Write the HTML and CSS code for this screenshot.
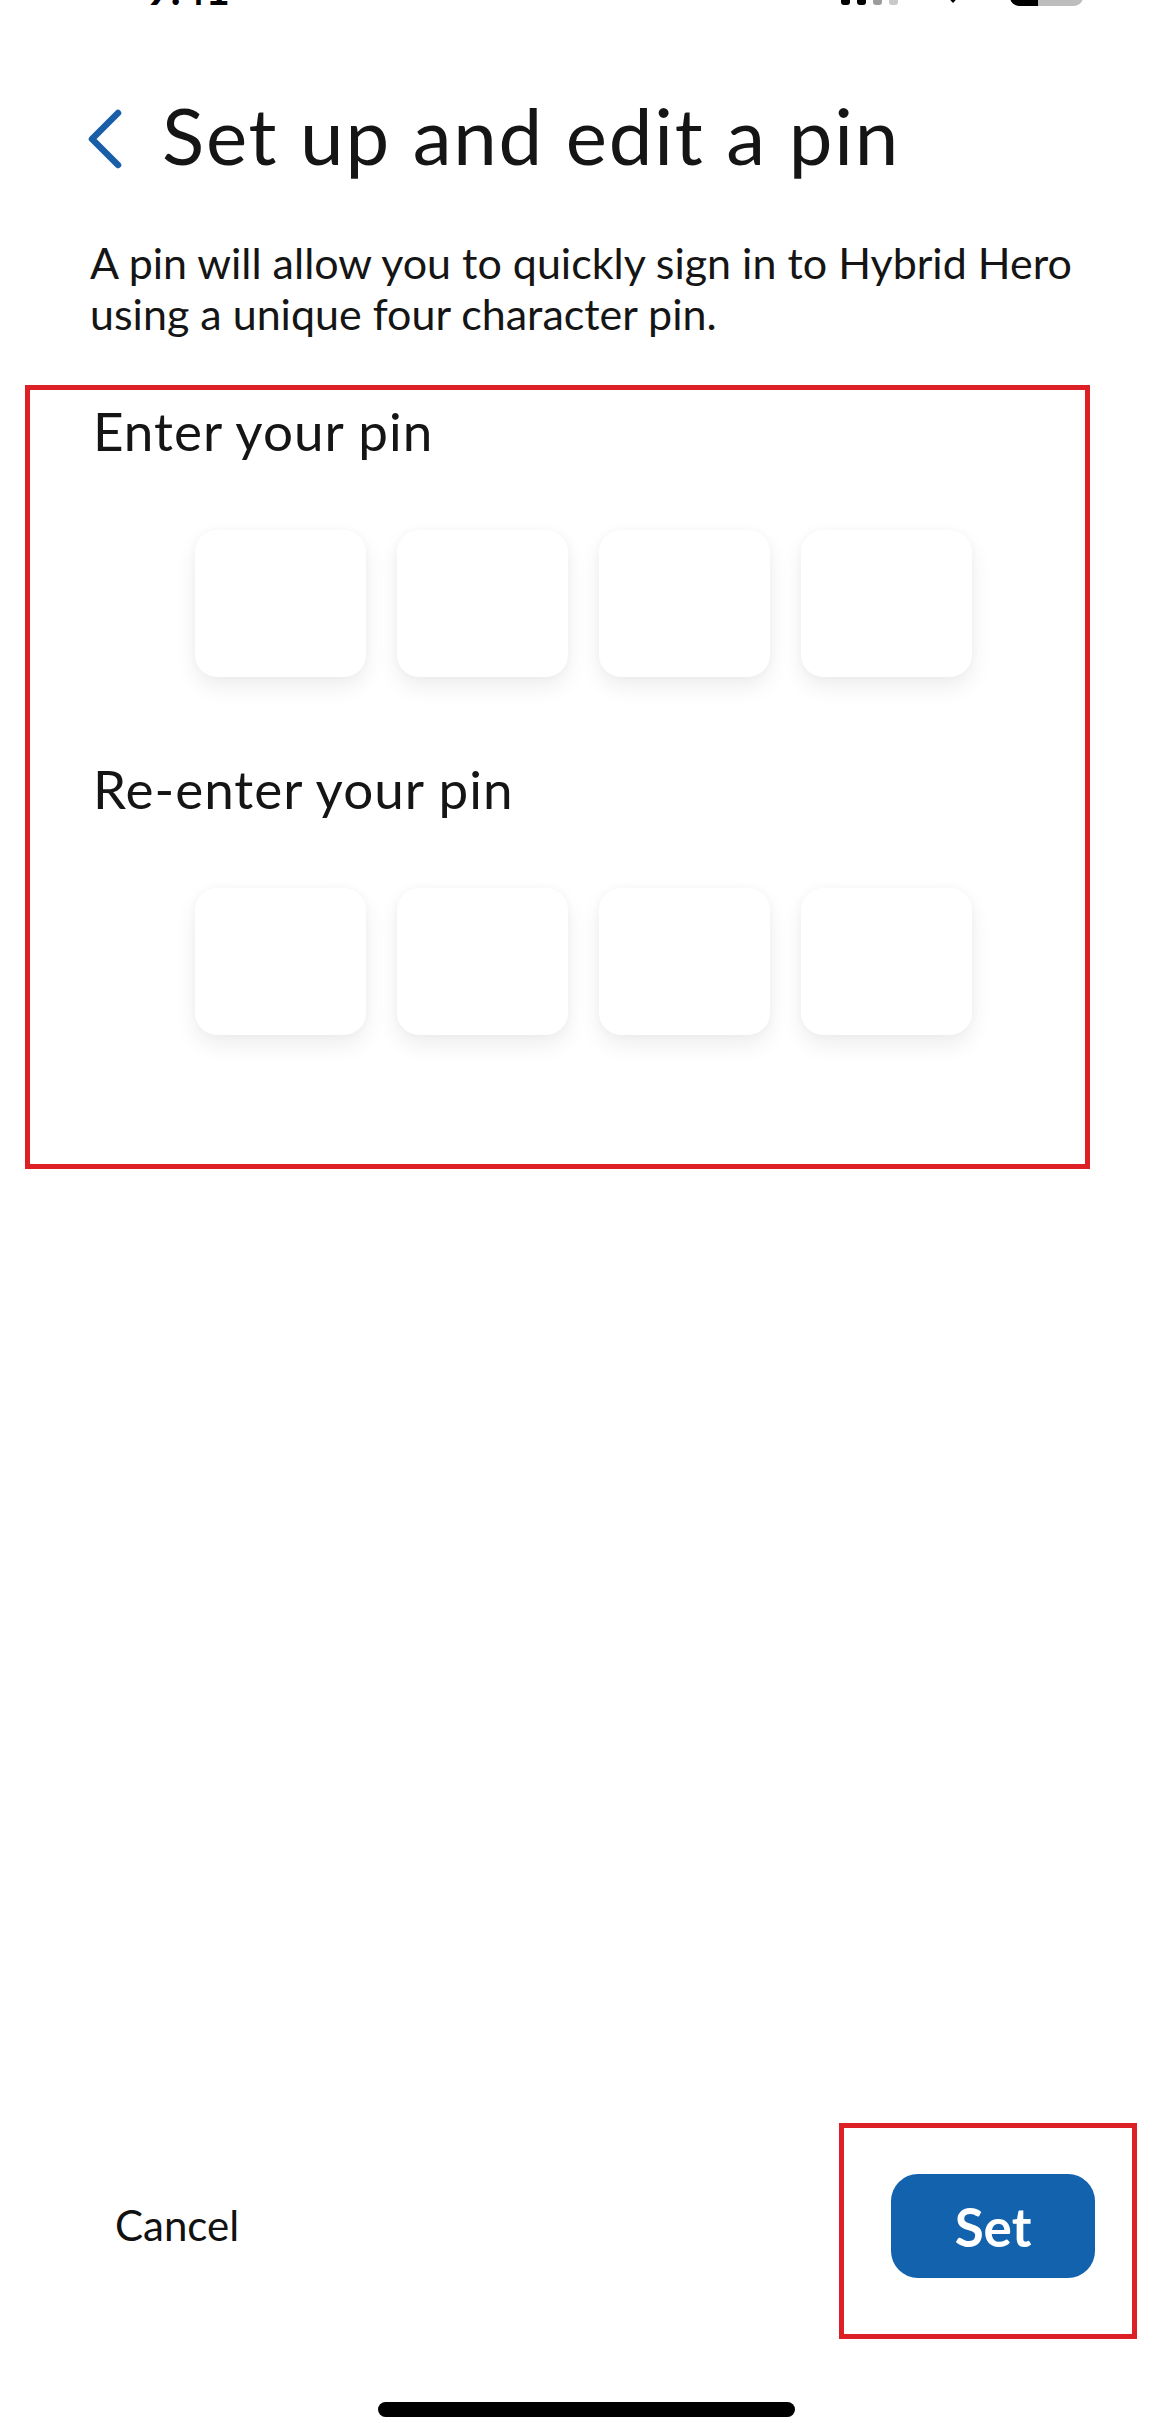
FILE: index.html
```html
<!DOCTYPE html>
<html lang="en">
<head>
    <meta charset="UTF-8">
    <meta name="viewport" content="width=device-width, initial-scale=1.0">
    <title>Set up and edit a pin</title>
    <link rel="stylesheet" href="styles.css">
</head>
<body>
    <div class="screen">
        <div class="status">
            <span class="time">9:41</span>
            <div class="signal">
                <span class="bar on b1"></span>
                <span class="bar on b2"></span>
                <span class="bar mid b3"></span>
                <span class="bar off b4"></span>
            </div>
            <svg class="wifi" width="30" height="22" viewBox="0 0 30 22">
                <path d="M3 8 A17 17 0 0 1 27 8 L15 21 Z" fill="#000"/>
            </svg>
            <div class="battery"></div>
        </div>

        <div class="header">
            <svg class="back" width="36" height="60" viewBox="0 0 36 60">
                <polyline points="31,4 5,30 31,56" fill="none" stroke="#1a5ea8" stroke-width="6.5" stroke-linecap="round" stroke-linejoin="round"/>
            </svg>
            <h1>Set up and edit a pin</h1>
        </div>

        <p class="intro">A pin will allow you to quickly sign in to Hybrid Hero using a unique four character pin.</p>

        <div class="pin-panel">
            <h2>Enter your pin</h2>
            <div class="pin-row">
                <input class="pin-box" type="password" maxlength="1">
                <input class="pin-box" type="password" maxlength="1">
                <input class="pin-box" type="password" maxlength="1">
                <input class="pin-box" type="password" maxlength="1">
            </div>
            <h2 class="second">Re-enter your pin</h2>
            <div class="pin-row">
                <input class="pin-box" type="password" maxlength="1">
                <input class="pin-box" type="password" maxlength="1">
                <input class="pin-box" type="password" maxlength="1">
                <input class="pin-box" type="password" maxlength="1">
            </div>
        </div>

        <div class="actions">
            <button class="cancel">Cancel</button>
            <div class="set-frame">
                <button class="set">Set</button>
            </div>
        </div>

        <div class="home-bar"></div>
    </div>
</body>
</html>
```

FILE: styles.css
```css
body {
    margin: 0;
    font-family: Lato, "Open Sans", sans-serif;
    color: #151515;
    background-color: #fff;
}
.screen {
    width: 1161px;
    min-height: 2423px;
    display: flex;
    flex-direction: column;
}

/* status bar, mostly cut off at the top */
.status {
    height: 7px;
    overflow: hidden;
    display: flex;
    align-items: flex-end;
}
.time {
    margin-left: 146px;
    margin-bottom: -3px;
    font-size: 42px;
    line-height: 42px;
    font-weight: 700;
    color: #000;
}
.signal {
    margin-left: auto;
    display: flex;
    align-items: flex-end;
    gap: 7px;
    margin-bottom: 2px;
}
.bar {
    width: 9px;
    border-radius: 3px;
}
.b1 { height: 12px; }
.b2 { height: 16px; }
.b3 { height: 20px; }
.b4 { height: 24px; }
.bar.on { background-color: #000; }
.bar.mid { background-color: #9c9c9c; }
.bar.off { background-color: #c9c9c9; }
.wifi {
    margin-left: 40px;
    margin-bottom: 3px;
}
.battery {
    width: 73px;
    height: 30px;
    margin-left: 42px;
    margin-right: 78px;
    margin-bottom: 1px;
    border-radius: 9px;
    background: linear-gradient(to right, #000 38%, #bdbdbd 38%);
}

/* header */
.header {
    display: flex;
    align-items: center;
    margin-top: 81px;
    padding-left: 87px;
}
.back {
    margin-top: 8px;
    margin-right: 39px;
}
h1 {
    margin: 0;
    font-size: 78px;
    line-height: 94px;
    font-weight: 400;
    letter-spacing: 1.8px;
}

.intro {
    margin: 55px 0 0 90px;
    width: 1000px;
    font-size: 43px;
    line-height: 51px;
}

/* pin entry */
.pin-panel {
    margin: 46px 0 0 25px;
    width: 1065px;
    box-sizing: border-box;
    border: 5px solid #dc2026;
    padding: 10px 0 129px 63px;
}
h2 {
    margin: 0;
    font-size: 53px;
    line-height: 61px;
    font-weight: 400;
    letter-spacing: 1px;
}
h2.second {
    margin-top: 81px;
}
.pin-row {
    display: flex;
    gap: 31px;
    margin: 69px 0 0 102px;
}
.pin-box {
    width: 171px;
    height: 147px;
    box-sizing: border-box;
    border: none;
    border-radius: 22px;
    background-color: #fff;
    box-shadow: 0 10px 22px rgba(0, 0, 0, 0.07), 0 0 10px rgba(0, 0, 0, 0.03);
    text-align: center;
    font-size: 50px;
    outline: none;
}

/* bottom actions */
.actions {
    margin-top: auto;
    display: flex;
    align-items: center;
    justify-content: space-between;
    padding-left: 115px;
    padding-right: 24px;
}
.cancel {
    margin-bottom: 12px;
    padding: 0;
    border: none;
    background: none;
    font-family: inherit;
    font-size: 42px;
    color: #111;
}
.set-frame {
    width: 298px;
    height: 216px;
    box-sizing: border-box;
    border: 5px solid #dc2026;
    padding: 46px 0 0 47px;
}
.set {
    width: 204px;
    height: 104px;
    border: none;
    border-radius: 27px;
    background-color: #1262ad;
    color: #fff;
    font-family: inherit;
    font-size: 53px;
    font-weight: 700;
}

.home-bar {
    width: 417px;
    height: 15px;
    margin: 63px 0 6px 378px;
    border-radius: 8px;
    background-color: #000;
}
```
